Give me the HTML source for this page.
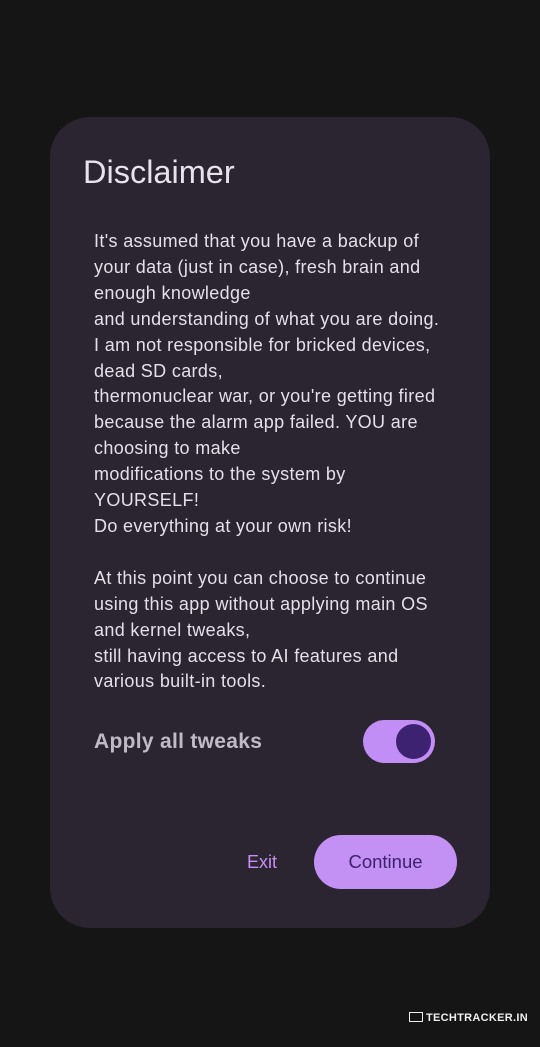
<!DOCTYPE html>
<html><head><style>
body{margin:0;width:540px;height:1047px;background:#151515;font-family:"Liberation Sans",sans-serif;position:relative;overflow:hidden}
.d{position:absolute;left:50px;top:117px;width:440px;height:811px;background:#2b2532;border-radius:40px}
.t{position:absolute;left:83px;top:154px;font-size:32.5px;color:#e8e2ec}
.b{position:absolute;left:94px;top:229px;font-size:18px;letter-spacing:.35px;line-height:25.9px;color:#e4dfe8;white-space:pre}
.a{position:absolute;left:94px;top:730px;font-size:21px;color:#cdc6d3;letter-spacing:.3px;font-weight:bold;opacity:.92}
.sw{position:absolute;left:363px;top:720px;width:72px;height:43px;border-radius:22px;background:#c08ef4}
.th{position:absolute;left:396px;top:724px;width:35px;height:35px;border-radius:50%;background:#3e2272}
.ex{position:absolute;left:247px;top:852px;font-size:18px;color:#c48ef2}
.c{position:absolute;left:314px;top:835px;width:143px;height:54px;border-radius:27px;background:#c390f4;color:#3e1f70;font-size:18.5px;text-align:center;line-height:54px}
.w{position:absolute;left:409px;top:1012px;color:#eee;font-size:11px;font-weight:bold;letter-spacing:.3px}
</style></head><body>
<div class="d"></div>
<div class="t">Disclaimer</div>
<div class="b">It's assumed that you have a backup of
your data (just in case), fresh brain and
enough knowledge
and understanding of what you are doing.
I am not responsible for bricked devices,
dead SD cards,
thermonuclear war, or you're getting fired
because the alarm app failed. YOU are
choosing to make
modifications to the system by
YOURSELF!
Do everything at your own risk!

At this point you can choose to continue
using this app without applying main OS
and kernel tweaks,
still having access to AI features and
various built-in tools.</div>
<div class="a">Apply all tweaks</div>
<div class="sw"></div><div class="th"></div>
<div class="ex">Exit</div>
<div class="c">Continue</div>
<div class="w"><span style="display:inline-block;width:14px;height:10px;border:1.5px solid #eee;vertical-align:-1px;margin-right:3px;box-sizing:border-box"></span>TECHTRACKER.IN</div>
</body></html>
